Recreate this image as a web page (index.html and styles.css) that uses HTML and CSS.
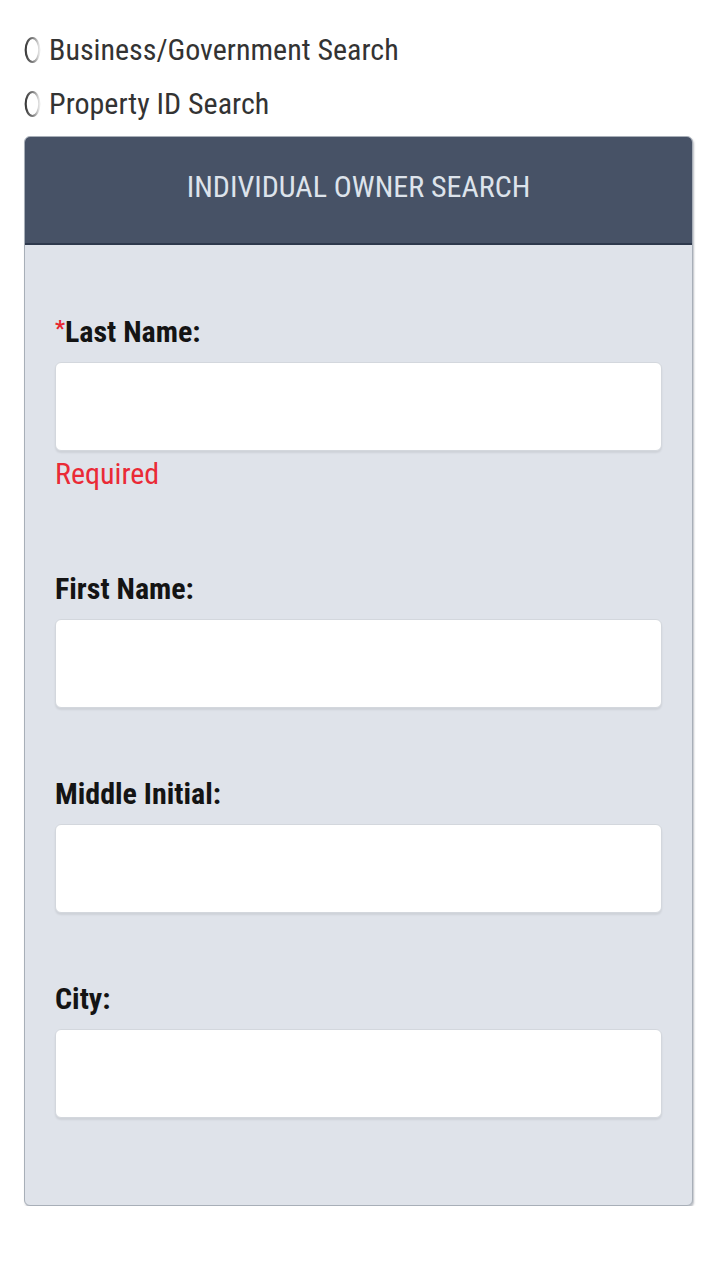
FILE: index.html
```html
<!DOCTYPE html>
<html lang="en">
<head>
<meta charset="utf-8">
<title>Individual Owner Search</title>
<link rel="stylesheet" href="styles.css">
</head>
<body>
<div class="page">
  <div class="radios">
    <label class="radio-row">
      <svg class="radio" width="17" height="28" viewBox="0 0 17 28">
        <defs>
          <linearGradient id="rg" x1="0" y1="0" x2="1" y2="0">
            <stop offset="0" stop-color="#3c3c3c"/>
            <stop offset="0.6" stop-color="#8a8a8a"/>
            <stop offset="1" stop-color="#e8e8e8"/>
          </linearGradient>
        </defs>
        <ellipse cx="8.5" cy="14" rx="6.8" ry="12" fill="none" stroke="url(#rg)" stroke-width="2.2"/>
      </svg>
      <span>Business/Government Search</span>
    </label>
    <label class="radio-row">
      <svg class="radio" width="17" height="28" viewBox="0 0 17 28">
        <ellipse cx="8.5" cy="14" rx="6.8" ry="12" fill="none" stroke="url(#rg)" stroke-width="2.2"/>
      </svg>
      <span>Property ID Search</span>
    </label>
  </div>

  <div class="card">
    <div class="card-header">INDIVIDUAL OWNER SEARCH</div>
    <div class="card-body">
      <div class="field">
        <div class="field-label"><span class="req">*</span>Last Name:</div>
        <div class="input"></div>
        <div class="error">Required</div>
      </div>
      <div class="field">
        <div class="field-label">First Name:</div>
        <div class="input"></div>
      </div>
      <div class="field">
        <div class="field-label">Middle Initial:</div>
        <div class="input"></div>
      </div>
      <div class="field">
        <div class="field-label">City:</div>
        <div class="input"></div>
      </div>
    </div>
  </div>
</div>
</body>
</html>
```

FILE: styles.css
```css
html, body {
  margin: 0;
  padding: 0;
  background: #ffffff;
}

body {
  font-family: "Roboto Condensed", "Liberation Sans Narrow", Roboto, "Liberation Sans", sans-serif;
  color: #222;
}

.page {
  padding: 23px 28px 0 24px;
}

.radios {
  display: flex;
  flex-direction: column;
}

.radio-row {
  display: flex;
  align-items: center;
  height: 54px;
  font-size: 30px;
  line-height: 54px;
  color: #333333;
}

.radio {
  margin-left: 0;
  margin-right: 8px;
  flex: none;
}

.card {
  margin-top: 5px;
  width: 667px;
  border: 1px solid #a8afb8;
  border-radius: 6px;
  overflow: hidden;
  box-shadow: 1px 2px 2px rgba(60, 70, 85, 0.35);
  background: #dfe3ea;
}

.card-header {
  height: 100px;
  line-height: 100px;
  padding-bottom: 6px;
  background: #475266;
  border-bottom: 2px solid #2e394c;
  color: #dde3eb;
  font-size: 30px;
  text-align: center;
}

.card-body {
  display: flex;
  flex-direction: column;
  gap: 68px;
  padding: 66px 30px 87px 30px;
}

.field {
  display: flex;
  flex-direction: column;
}

.field-label {
  font-size: 30px;
  font-weight: bold;
  line-height: 36px;
  color: #141414;
}

.req {
  color: #e8262f;
  font-size: 22px;
  vertical-align: 6px;
}

.input {
  margin-top: 12px;
  height: 87px;
  background: #ffffff;
  border: 1px solid #d3d7dd;
  border-radius: 6px;
  box-shadow: 0 2px 2px rgba(0, 0, 0, 0.08);
}

.error {
  margin-top: 5px;
  margin-bottom: 11px;
  font-size: 30px;
  line-height: 36px;
  color: #ea2a36;
}
```
